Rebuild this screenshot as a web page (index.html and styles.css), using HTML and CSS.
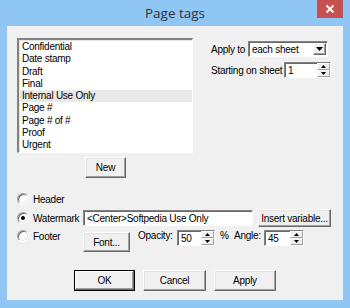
FILE: index.html
```html
<!DOCTYPE html>
<html>
<head>
<meta charset="utf-8">
<link rel="stylesheet" href="styles.css">
</head>
<body>
<div class="frame">
  <div class="titlebar">
    <span class="title">Page tags</span>
    <div class="close"><svg width="10" height="10" viewBox="0 0 10 10"><path d="M1.5 1.5 L8.5 8.5 M8.5 1.5 L1.5 8.5" stroke="#fff" stroke-width="1.8"/></svg></div>
  </div>
  <div class="client">
    <div class="top">
      <div class="listbox">
        <div class="item">Confidential</div>
        <div class="item">Date stamp</div>
        <div class="item">Draft</div>
        <div class="item">Final</div>
        <div class="item sel">Internal Use Only</div>
        <div class="item">Page #</div>
        <div class="item">Page # of #</div>
        <div class="item">Proof</div>
        <div class="item">Urgent</div>
      </div>
      <div class="opts">
        <div class="opt-row r1">
          <span class="lbl w37">Apply to</span>
          <div class="combo"><span class="ctext">each sheet</span><span class="dd"><svg width="7" height="4" viewBox="0 0 7 4"><path d="M0 0 H7 L3.5 4 Z" fill="#000"/></svg></span></div>
        </div>
        <div class="opt-row r2">
          <span class="lbl w73">Starting on sheet</span>
          <div class="spin w47"><span class="stext">1</span><span class="spinbtns"><span class="sb"><svg width="5" height="3" viewBox="0 0 5 3"><path d="M2.5 0 L5 3 H0 Z" fill="#000"/></svg></span><span class="sb"><svg width="5" height="3" viewBox="0 0 5 3"><path d="M0 0 H5 L2.5 3 Z" fill="#000"/></svg></span></span></div>
        </div>
      </div>
    </div>
    <div class="newrow"><button class="btn new">New</button></div>

    <div class="row header-row">
      <div class="ritem"><span class="radio"></span><span class="lbl">Header</span></div>
    </div>
    <div class="row wm-row">
      <div class="ritem"><span class="radio on"></span><span class="lbl">Watermark</span></div>
      <div class="edit wmedit">&lt;Center&gt;Softpedia Use Only</div>
      <button class="btn insvar">Insert variable...</button>
    </div>
    <div class="row footer-row">
      <div class="ritem"><span class="radio"></span><span class="lbl">Footer</span></div>
      <button class="btn font">Font...</button>
      <span class="lbl oplbl">Opacity:</span>
      <div class="spin w38"><span class="stext">50</span><span class="spinbtns"><span class="sb"><svg width="5" height="3" viewBox="0 0 5 3"><path d="M2.5 0 L5 3 H0 Z" fill="#000"/></svg></span><span class="sb"><svg width="5" height="3" viewBox="0 0 5 3"><path d="M0 0 H5 L2.5 3 Z" fill="#000"/></svg></span></span></div>
      <span class="lbl pct">%</span>
      <span class="lbl anglbl">Angle:</span>
      <div class="spin w40"><span class="stext">45</span><span class="spinbtns"><span class="sb"><svg width="5" height="3" viewBox="0 0 5 3"><path d="M2.5 0 L5 3 H0 Z" fill="#000"/></svg></span><span class="sb"><svg width="5" height="3" viewBox="0 0 5 3"><path d="M0 0 H5 L2.5 3 Z" fill="#000"/></svg></span></span></div>
    </div>
    <div class="btnrow">
      <button class="btn ok">OK</button>
      <button class="btn cancel">Cancel</button>
      <button class="btn apply">Apply</button>
    </div>
  </div>
</div>
</body>
</html>
```
FILE: styles.css
```css
* { box-sizing: border-box; }
html, body { margin: 0; padding: 0; }
body { width: 350px; height: 308px; overflow: hidden; font-family: "Liberation Sans", Arial, sans-serif; font-size: 10px; letter-spacing: -0.25px; color: #000; }
.frame { width: 350px; height: 308px; background: #8fc6f4; padding: 0 7px 8px 7px; display: flex; flex-direction: column; }
.titlebar { height: 26px; flex: none; display: flex; justify-content: center; align-items: center; position: relative; }
.title { font-family: "Open Sans", "Noto Sans", sans-serif; font-size: 13.5px; letter-spacing: 0; color: #333; margin-top: 0; }
.close { position: absolute; right: 0; top: 0; width: 26px; height: 18px; background: #c75050; display: flex; align-items: center; justify-content: center; }
.client { flex: 1; background: #f0f0f0; padding: 12px 0 0 10px; display: flex; flex-direction: column; }
.top { display: flex; }
.listbox { width: 176px; height: 115px; background: #fff; border-style: solid; border-width: 2px 1px 1px 2px; border-color: #828282 #fff #fff #828282; box-shadow: 1px 1px 0 #e3e3e3 inset; padding-top: 1px; }
.item { height: 12.3px; line-height: 12.3px; padding-left: 3px; white-space: nowrap; }
.item.sel { background: #e8e8e8; }
.opts { margin-left: 18px; display: flex; flex-direction: column; }
.opt-row { display: flex; align-items: center; height: 16px; }
.r1 { margin-top: 3px; }
.r2 { margin-top: 5px; }
.lbl { white-space: nowrap; }
.w37 { width: 37px; }
.w73 { width: 73px; }
.combo { width: 80px; height: 16px; background: #fff; border-style: solid; border-width: 1px; border-color: #828282 #fff #fff #828282; box-shadow: 1px 1px 0 #696969 inset; display: flex; align-items: center; padding-left: 3px; }
.ctext { flex: 1; }
.dd { width: 13px; height: 12px; margin-right: 1px; background: #f0f0f0; border-style: solid; border-width: 1px; border-color: #fff #696969 #696969 #fff; box-shadow: -1px -1px 0 #a0a0a0 inset; display: flex; align-items: center; justify-content: center; }
.spin { height: 16px; background: #fff; border-style: solid; border-width: 1px; border-color: #828282 #fff #fff #828282; box-shadow: 1px 1px 0 #696969 inset; display: flex; align-items: center; padding-left: 3px; }
.w47 { width: 47px; }
.w38 { width: 38px; }
.w40 { width: 40px; }
.stext { flex: 1; }
.spinbtns { width: 13px; height: 14px; display: flex; flex-direction: column; margin-right: 0; }
.sb { flex: 1; background: #f0f0f0; border-style: solid; border-width: 1px; border-color: #fff #a0a0a0 #a0a0a0 #fff; display: flex; align-items: center; justify-content: center; }
.btn { font-family: "Liberation Sans", Arial, sans-serif; font-size: 10px; letter-spacing: -0.25px; color: #000; background: #f0f0f0; border-style: solid; border-width: 1px; border-color: #fff #696969 #696969 #fff; box-shadow: -1px -1px 0 #a0a0a0 inset, 1px 1px 0 #e3e3e3 inset; padding: 0; margin: 0; display: flex; align-items: center; justify-content: center; }
.newrow { display: flex; margin-top: 4px; padding-left: 68px; }
.new { width: 41px; height: 21px; }
.row { display: flex; align-items: flex-start; }
.header-row { margin-top: 14px; height: 14px; }
.wm-row { margin-top: 3px; height: 18px; align-items: center; }
.footer-row { margin-top: 3px; height: 22px; }
.ritem { width: 66px; display: flex; align-items: center; height: 12px; }
.header-row .ritem { height: 14px; }
.footer-row .ritem { margin-top: 0px; }
.radio { width: 12px; height: 12px; border-radius: 50%; background: #fff; border: 1px solid; border-color: #a0a0a0 #fff #fff #a0a0a0; box-shadow: 1px 1px 0 #696969 inset, -1px -1px 0 #e3e3e3 inset; margin-right: 4px; display: flex; align-items: center; justify-content: center; flex: none; }
.radio.on::after { content: ""; width: 4px; height: 4px; border-radius: 50%; background: #000; }
.edit { height: 16px; background: #fff; border-style: solid; border-width: 1px; border-color: #828282 #fff #fff #828282; box-shadow: 1px 1px 0 #696969 inset; display: flex; align-items: center; padding-left: 3px; white-space: nowrap; overflow: hidden; }
.wmedit { width: 170px; }
.insvar { width: 73px; height: 18px; margin-left: 5px; }
.font { width: 47px; height: 20px; margin-top: 2px; }
.oplbl { margin-left: 8px; width: 39px; margin-top: 0; line-height: 12px; }
.pct { margin-left: 5px; width: 14px; line-height: 12px; }
.anglbl { width: 30px; line-height: 12px; }
.footer-row .spin { margin-top: 0; }
.btnrow { display: flex; margin-top: 18px; padding-left: 57px; gap: 8px; }
.ok { width: 61px; height: 21px; border: 1px solid #000; box-shadow: -1px -1px 0 #696969 inset, 1px 1px 0 #fff inset, -2px -2px 0 #a0a0a0 inset; }
.cancel { width: 63px; height: 21px; }
.apply { width: 62px; height: 21px; }
```
